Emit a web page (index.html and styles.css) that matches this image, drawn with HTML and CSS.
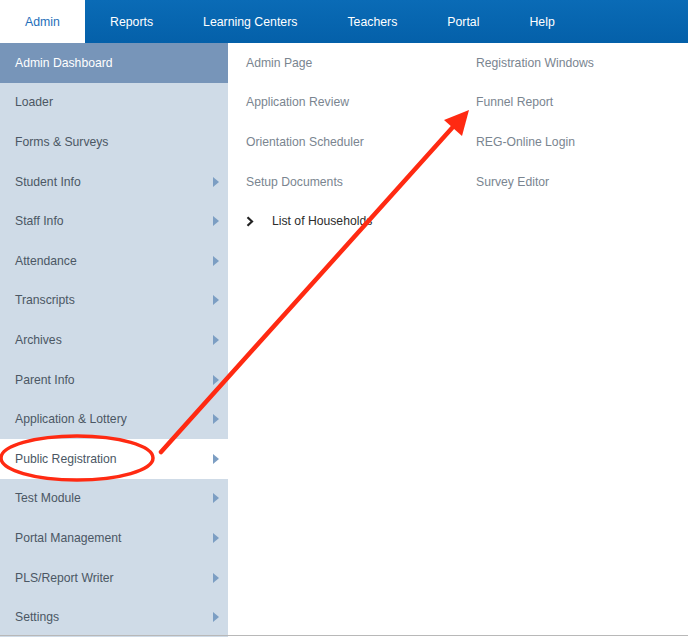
FILE: index.html
```html
<!DOCTYPE html>
<html>
<head>
<meta charset="utf-8">
<link rel="stylesheet" href="styles.css">
</head>
<body>
<div class="page">
  <nav class="topnav">
    <a class="tab active">Admin</a>
    <a class="tab">Reports</a>
    <a class="tab">Learning Centers</a>
    <a class="tab">Teachers</a>
    <a class="tab">Portal</a>
    <a class="tab">Help</a>
  </nav>
  <div class="main">
    <ul class="sidebar">
      <li class="item selected">Admin Dashboard</li>
      <li class="item">Loader</li>
      <li class="item">Forms &amp; Surveys</li>
      <li class="item has-sub">Student Info</li>
      <li class="item has-sub">Staff Info</li>
      <li class="item has-sub">Attendance</li>
      <li class="item has-sub">Transcripts</li>
      <li class="item has-sub">Archives</li>
      <li class="item has-sub">Parent Info</li>
      <li class="item has-sub">Application &amp; Lottery</li>
      <li class="item has-sub hover">Public Registration</li>
      <li class="item has-sub">Test Module</li>
      <li class="item has-sub">Portal Management</li>
      <li class="item has-sub">PLS/Report Writer</li>
      <li class="item has-sub">Settings</li>
    </ul>
    <div class="submenu">
      <ul class="subcol">
        <li class="subitem">Admin Page</li>
        <li class="subitem">Application Review</li>
        <li class="subitem">Orientation Scheduler</li>
        <li class="subitem">Setup Documents</li>
        <li class="subitem expander"><svg class="chev" width="8" height="11" viewBox="0 0 8 11"><path d="M1.5 1.2 L6 5.5 L1.5 9.8" fill="none" stroke="#222" stroke-width="2.2"/></svg><span>List of Households</span></li>
      </ul>
      <ul class="subcol second">
        <li class="subitem">Registration Windows</li>
        <li class="subitem">Funnel Report</li>
        <li class="subitem">REG-Online Login</li>
        <li class="subitem">Survey Editor</li>
      </ul>
    </div>
  </div>
  <svg class="annot" width="688" height="637" viewBox="0 0 688 637">
    <ellipse cx="77" cy="458" rx="76" ry="22" fill="none" stroke="#ff2a12" stroke-width="3.5"/>
    <line x1="161" y1="452" x2="452" y2="128" stroke="#ff2a12" stroke-width="4.5" stroke-linecap="round"/>
    <polygon points="469,110 444,120 462,136" fill="#ff2a12"/>
  </svg>
</div>
</body>
</html>
```
FILE: styles.css
```css
* { box-sizing: border-box; }
html, body { margin: 0; padding: 0; background: #fff; }
body { font-family: "Liberation Sans", Arial, Helvetica, sans-serif; font-size: 12px; overflow: hidden; }
.page { position: relative; width: 688px; height: 637px; overflow: hidden; }
.page::after { content: ""; position: absolute; left: 0; right: 0; top: 635px; height: 1px; background: #b8b8b8; }
.topnav {
  display: flex; height: 43px;
  background: linear-gradient(#0a6bb6, #0460a9);
}
.tab {
  display: flex; align-items: center; padding: 0 25px;
  color: #fff; font-size: 12.3px; text-decoration: none;
}
.tab.active { background: #fff; color: #1f6fba; width: 85px; justify-content: center; padding: 0; }
.main { display: flex; }
ul { list-style: none; margin: 0; padding: 0; }
.sidebar { width: 228px; flex-shrink: 0; background: #cfdbe7; }
.item {
  height: 39.6px; display: flex; align-items: center; justify-content: space-between;
  padding: 0 9px 0 15px; color: #4b5764; font-size: 12.2px;
}
.item.selected { background: #7795b9; color: #fff; }
.item.hover { background: #fff; }
.has-sub::after {
  content: ""; width: 0; height: 0;
  border-top: 5px solid transparent; border-bottom: 5px solid transparent;
  border-left: 6px solid #7c9ec3;
}
.submenu { display: flex; flex: 1; padding-left: 18px; }
.subcol { width: 230px; flex-shrink: 0; }
.subitem { height: 39.6px; display: flex; align-items: center; color: #7a8590; font-size: 12.2px; }
.expander { color: #2c2c2c; }
.chev { margin-right: 18px; }
.annot { position: absolute; left: 0; top: 0; pointer-events: none; }
```
